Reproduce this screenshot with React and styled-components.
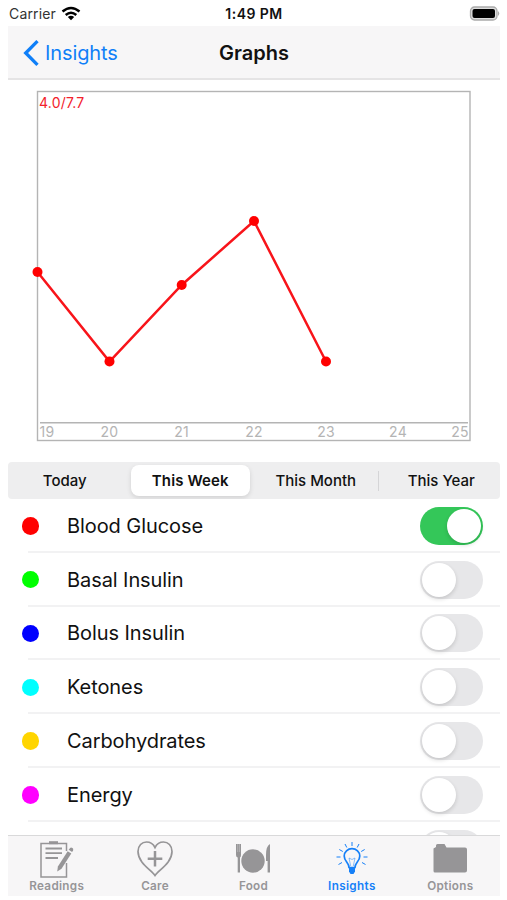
import React, { useState } from 'react';
import styled, { createGlobalStyle } from 'styled-components';

const GlobalStyle = createGlobalStyle`
    * {
        box-sizing: border-box;
    }
    body {
        margin: 0;
        background: #fff;
        font-family: Inter, "Liberation Sans", sans-serif;
        color: #111;
    }
`;

const Screen = styled.div`
    display: flex;
    flex-direction: column;
    width: 492px;
    height: 896px;
    margin-left: 8px;
    overflow: hidden;
    background: #fff;
`;

const StatusBar = styled.header`
    display: grid;
    grid-template-columns: 1fr auto 1fr;
    align-items: center;
    height: 26px;
    padding-top: 1px;
    font-size: 14px;
`;
const Carrier = styled.div`
    display: flex;
    align-items: center;
    gap: 5px;
    padding-left: 1px;
    color: #333;
    letter-spacing: 0.15px;
`;
const Clock = styled.span`
    font-weight: 600;
    font-size: 14px;
    letter-spacing: 0.45px;
`;
const Battery = styled.svg`
    justify-self: end;
`;

const NavBar = styled.nav`
    display: grid;
    grid-template-columns: 1fr auto 1fr;
    align-items: center;
    height: 54px;
    flex: none;
    padding-top: 1px;
    background: #f7f6f7;
    border-bottom: 2px solid #e5e4e5;
`;
const BackButton = styled.button`
    display: flex;
    align-items: center;
    gap: 6px;
    padding: 0 0 0 15px;
    border: 0;
    background: none;
    color: #0f7ff8;
    font: inherit;
    font-size: 20px;
    letter-spacing: -0.1px;
`;
const Title = styled.h1`
    margin: 0;
    font-size: 20px;
    font-weight: 600;
    letter-spacing: 0;
`;

const Chart = styled.svg`
    display: block;
    flex: none;
    height: 382px;
    font-size: 14px;
`;

const Segments = styled.div`
    flex: none;
    height: 37px;
    overflow: hidden;
    border-radius: 4px;
    background: #eeeeef;
`;
const SegmentTrack = styled.div`
    display: grid;
    grid-template-columns: repeat(4, 125.5px);
    height: 100%;
    margin-left: -6px;
`;
const Segment = styled.button`
    position: relative;
    margin: 3px;
    padding: 0;
    border: 0;
    border-radius: 8px;
    background: ${({ $active }) => ($active ? '#fff' : 'none')};
    box-shadow: ${({ $active }) => ($active ? '0 2px 5px rgba(0, 0, 0, 0.12)' : 'none')};
    color: #111;
    font: inherit;
    font-size: 15px;
    font-weight: ${({ $active }) => ($active ? 600 : 500)};
    letter-spacing: ${({ $active }) => ($active ? '0.1px' : '0')};

    &::after {
        content: "";
        display: ${({ $divider }) => ($divider ? 'block' : 'none')};
        position: absolute;
        top: 6px;
        right: -3px;
        width: 1px;
        height: 20px;
        background: #d5d5d7;
    }
`;

const List = styled.div`
    flex: 1;
    min-height: 0;
    overflow: hidden;
`;
const Row = styled.div`
    display: grid;
    grid-template-columns: 39px 1fr 63px;
    align-items: center;
    height: 53.8px;
    margin-left: 20px;
    padding: 2px 17px 0 0;
    border-bottom: 2px solid #f2f2f3;
    font-size: 20px;
`;
const Dot = styled.span`
    width: 17.5px;
    height: 17.5px;
    margin-left: -6.5px;
    border-radius: 50%;
    background: ${({ $color }) => $color};
`;
const Label = styled.span`
    letter-spacing: -0.08px;
`;
const Toggle = styled.button`
    display: flex;
    justify-content: ${({ $on }) => ($on ? 'flex-end' : 'flex-start')};
    width: 63px;
    height: 38px;
    padding: 2px;
    border: 0;
    border-radius: 19px;
    background: ${({ $on }) => ($on ? '#34c759' : '#e7e7e9')};
`;
const Knob = styled.span`
    width: 34px;
    height: 34px;
    border-radius: 50%;
    background: #fff;
    box-shadow: 0 2px 4px rgba(0, 0, 0, 0.15);
`;

const TabBar = styled.nav`
    display: grid;
    grid-template-columns: repeat(5, 1fr);
    flex: none;
    height: 61px;
    border-top: 1px solid #d9d9da;
    background: #f7f6f7;
`;
const Tab = styled.button`
    display: flex;
    flex-direction: column;
    align-items: center;
    padding: 3px 1px 0 0;
    border: 0;
    background: none;
    color: ${({ $active }) => ($active ? '#1680f8' : '#969597')};
    font: inherit;
    font-size: 11.7px;
    line-height: 14px;
    font-weight: 600;
    letter-spacing: ${({ $active }) => ($active ? '0.35px' : '0.3px')};

    svg {
        display: block;
    }
`;

const points = [
    [29.5, 192],
    [101.5, 281.5],
    [173.7, 205],
    [246, 141],
    [318, 281.5],
];

const days = [
    { day: '19', x: 39 },
    { day: '20', x: 101.5 },
    { day: '21', x: 173.5 },
    { day: '22', x: 246 },
    { day: '23', x: 318 },
    { day: '24', x: 390 },
    { day: '25', x: 452 },
];

const series = [
    { name: 'Blood Glucose', color: '#ff0000' },
    { name: 'Basal Insulin', color: '#00ff00' },
    { name: 'Bolus Insulin', color: '#0000ff' },
    { name: 'Ketones', color: '#00ffff' },
    { name: 'Carbohydrates', color: '#ffd500' },
    { name: 'Energy', color: '#ff00ff' },
    { name: '', color: 'transparent' },
];

const ReadingsIcon = () => (
    <svg width="44" height="40" viewBox="0 0 44 40" fill="none" stroke="currentColor">
        <path d="M31.5 12V4.5H6V38h25.500V24" strokeWidth="1.5" />
        <path d="M14 3.700h9" strokeWidth="3" />
        <path d="M10.500 9.500H27M10.500 14.200H27M10.500 19H23" strokeWidth="1.8" />
        <path d="M32.700 12.300l3.600 2.300-9.800 15.200-4.300 2.700.7-5z" fill="currentColor" stroke="none" />
        <path d="M33.700 10.700l1.400-1.800q1-.8 2.400.2 1.200 1 .6 2.100l-1 1.700z" fill="currentColor" stroke="none" />
    </svg>
);

const CareIcon = () => (
    <svg width="44" height="40" viewBox="0 0 44 40" fill="none" stroke="currentColor">
        <path d="M22 36.500C18.500 31 5 24 5 12.500 5 6.500 9 3 13.500 3c4 0 7 2.500 8.500 5.500C23.500 5.500 26.500 3 30.500 3 35 3 39 6.500 39 12.500 39 24 25.500 31 22 36.500z" strokeWidth="1.700" />
        <path d="M22 12v15.500M14.700 19.700h14.600" strokeWidth="2.500" />
    </svg>
);

const FoodIcon = () => (
    <svg width="44" height="40" viewBox="0 0 44 40" fill="currentColor">
        <circle cx="22" cy="22" r="11.700" />
        <path d="M5 5h5v11q0 2-1 2.500V33.500H6.700V18.500Q5 18 5 16z" />
        <path d="M6.700 5v8M8.400 5v8" stroke="#f7f6f7" strokeWidth=".3" />
        <path d="M39 5v28.500h-2.400V22H35V16q0-9 4-11z" />
    </svg>
);

const InsightsIcon = () => (
    <svg width="44" height="40" viewBox="0 0 44 40" fill="none" stroke="currentColor">
        <path d="M19 28.500c0-5-4.800-6-4.800-11.500a7.800 7.300 0 0 1 15.600 0c0 5.500-4.800 6.500-4.800 11.500z" strokeWidth="1.700" />
        <path d="M20.700 27l-1.700-8 3 1.500 3-1.500-1.700 8" strokeWidth=".7" opacity=".7" />
        <path d="M19 29h6v3.500l-1.500 2.500h-3L19 32.500z" fill="currentColor" stroke="none" />
        <path d="M22 3v4M15 5l1.800 3.500M29 5l-1.800 3.500M9.300 10.500l3.500 2M34.700 10.500l-3.500 2M6.500 18h4M33.500 18h4M8.500 25.500l3.500-2M35.500 25.500l-3.500-2" strokeWidth="1" />
    </svg>
);

const OptionsIcon = () => (
    <svg width="44" height="40" viewBox="0 0 44 40" fill="currentColor">
        <path d="M5.500 32V9.500L8 8V6.500Q8 5 9.500 5h7L18.500 8.500H37Q39 8.500 39 10.500V31.500Q39 33.500 37 33.500H7Q5.500 33.500 5.500 32z" />
    </svg>
);

const tabs = [
    { name: 'Readings', Icon: ReadingsIcon },
    { name: 'Care', Icon: CareIcon },
    { name: 'Food', Icon: FoodIcon },
    { name: 'Insights', Icon: InsightsIcon },
    { name: 'Options', Icon: OptionsIcon },
];

const App = () => {
    const [range, setRange] = useState('This Week');
    const [enabled, setEnabled] = useState(['Blood Glucose']);

    function toggleSeries(name) {
        setEnabled(enabled.includes(name) ? enabled.filter(n => n !== name) : [...enabled, name]);
    }

    return (
        <Screen>
            <GlobalStyle />
            <StatusBar>
                <Carrier>
                    Carrier
                    <svg width="20" height="15" viewBox="0 0 20 15" fill="none" stroke="#000" strokeWidth="2.500">
                        <path d="M1.500 5.500Q10-1.500 18.500 5.500" />
                        <path d="M4.700 9Q10 4.500 15.300 9" />
                        <path d="M10 14.200L6.800 11Q10 8.600 13.200 11z" fill="#000" stroke="none" />
                    </svg>
                </Carrier>
                <Clock>1:49 PM</Clock>
                <Battery width="31" height="15" viewBox="0 0 31 15">
                    <rect x="1.500" y="1" width="26.500" height="13" rx="4" fill="#ddd" stroke="#aaa" strokeWidth="1.300" />
                    <rect x="3.500" y="3" width="22.500" height="9" rx="2" fill="#000" />
                    <path d="M29 5q2.500 2.500 0 5z" fill="#aaa" />
                </Battery>
            </StatusBar>
            <NavBar>
                <BackButton>
                    <svg width="16" height="26" viewBox="0 0 16 26" fill="none" stroke="currentColor" strokeWidth="3.300">
                        <path d="M14.500 1.200L2.700 13l11.800 11.800" />
                    </svg>
                    Insights
                </BackButton>
                <Title>Graphs</Title>
            </NavBar>

            <Chart width="492" height="382" viewBox="0 0 492 382">
                <rect x="29.500" y="11.500" width="432.500" height="349" fill="#fff" stroke="#b4b4b4" strokeWidth="1.400" />
                <path d="M32 342.700h428" stroke="#b4b4b4" strokeWidth="1.400" />
                <text x="31" y="27.500" fill="#f3212b" letterSpacing="0.2">4.0/7.7</text>
                {days.map(({ day, x }) => (
                    <text key={day} x={x} y="357" textAnchor="middle" fill="#b4b4b4" letterSpacing="0.2">{day}</text>
                ))}
                <polyline points={points.join(' ')} fill="none" stroke="#f8141a" strokeWidth="2.500" />
                {points.map(([x, y]) => (
                    <circle key={x} cx={x} cy={y} r="5" fill="#ff0000" />
                ))}
            </Chart>

            <Segments>
                <SegmentTrack>
                    {['Today', 'This Week', 'This Month', 'This Year'].map(name => (
                        <Segment
                            key={name}
                            $active={name === range}
                            $divider={name === 'This Month'}
                            onClick={() => setRange(name)}
                        >
                            {name}
                        </Segment>
                    ))}
                </SegmentTrack>
            </Segments>

            <List>
                {series.map(({ name, color }) => (
                    <Row key={color}>
                        <Dot $color={color} />
                        <Label>{name}</Label>
                        <Toggle $on={enabled.includes(name)} onClick={() => toggleSeries(name)}>
                            <Knob />
                        </Toggle>
                    </Row>
                ))}
            </List>

            <TabBar>
                {tabs.map(({ name, Icon }) => (
                    <Tab key={name} $active={name === 'Insights'}>
                        <Icon />
                        {name}
                    </Tab>
                ))}
            </TabBar>
        </Screen>
    );
};

export default App;
